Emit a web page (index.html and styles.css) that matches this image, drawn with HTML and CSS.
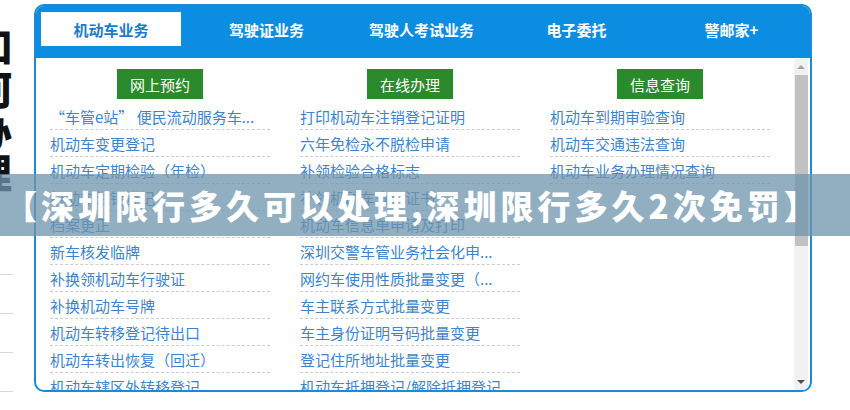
FILE: index.html
```html
<!DOCTYPE html>
<html lang="zh-CN">
<head>
<meta charset="utf-8">
<title>机动车业务</title>
<link rel="stylesheet" href="styles.css">
</head>
<body>
<div class="page">
  <aside class="side">
    <div class="side-chars">
      <span><b>如</b></span><span><b>何</b></span><span><b>办</b></span><span><b>理</b></span><span><b>：</b></span>
    </div>
    <div class="side-lines">
      <i></i><i></i><i></i><i></i>
    </div>
  </aside>
  <div class="panel">
    <nav class="tabs">
      <div class="tab active">机动车业务</div>
      <div class="tab">驾驶证业务</div>
      <div class="tab">驾驶人考试业务</div>
      <div class="tab">电子委托</div>
      <div class="tab">警邮家+</div>
    </nav>
    <div class="body">
      <div class="cols">
        <section class="col">
          <div class="btn-wrap"><span class="btn">网上预约</span></div>
          <ul class="list">
            <li>“车管e站” 便民流动服务车...</li>
            <li>机动车变更登记</li>
            <li>机动车定期检验（年检）</li>
            <li>机动车注销登记</li>
            <li>档案更正</li>
            <li>新车核发临牌</li>
            <li>补换领机动车行驶证</li>
            <li>补换机动车号牌</li>
            <li>机动车转移登记待出口</li>
            <li>机动车转出恢复（回迁）</li>
            <li>机动车辖区外转移登记</li>
          </ul>
        </section>
        <section class="col">
          <div class="btn-wrap"><span class="btn">在线办理</span></div>
          <ul class="list">
            <li>打印机动车注销登记证明</li>
            <li>六年免检永不脱检申请</li>
            <li>补领检验合格标志</li>
            <li>补领机动车登记证书</li>
            <li>机动车信息单申请及打印</li>
            <li>深圳交警车管业务社会化申...</li>
            <li>网约车使用性质批量变更（...</li>
            <li>车主联系方式批量变更</li>
            <li>车主身份证明号码批量变更</li>
            <li>登记住所地址批量变更</li>
            <li>机动车抵押登记/解除抵押登记</li>
          </ul>
        </section>
        <section class="col">
          <div class="btn-wrap"><span class="btn">信息查询</span></div>
          <ul class="list">
            <li>机动车到期审验查询</li>
            <li>机动车交通违法查询</li>
            <li>机动车业务办理情况查询</li>
          </ul>
        </section>
      </div>
      <div class="scrollbar">
        <span class="arrow up"></span>
        <span class="thumb"></span>
        <span class="arrow down"></span>
      </div>
    </div>
  </div>
</div>
<div class="banner">【深圳限行多久可以处理,深圳限行多久2次免罚】</div>
</body>
</html>
```

FILE: styles.css
```css
* { box-sizing: border-box; }
html, body { margin: 0; padding: 0; background: #fff; }
body {
  width: 850px;
  height: 410px;
  overflow: hidden;
  font-family: "Noto Sans CJK SC", "Microsoft YaHei", sans-serif;
  position: relative;
}
.page {
  display: flex;
  align-items: flex-start;
}
.side {
  width: 14px;
  margin-right: 20px;
  height: 410px;
  overflow: hidden;
  display: flex;
  flex-direction: column;
}
.side-chars {
  display: flex;
  flex-direction: column;
  margin-top: 24px;
  width: 12px;
}
.side-chars span {
  display: flex;
  justify-content: flex-end;
  width: 12px;
  height: 42px;
}
.side-chars b {
  flex-shrink: 0;
  display: block;
  width: 40px;
  font-size: 40px;
  line-height: 42px;
  font-weight: 900;
  color: #111;
}
.side-lines {
  margin-top: 40px;
  display: flex;
  flex-direction: column;
  gap: 38px;
}
.side-lines i {
  display: block;
  width: 13px;
  height: 1px;
  background: #d6d6d6;
}
.panel {
  margin-top: 4px;
  width: 778px;
  height: 388px;
  border: 2px solid #1c8ad8;
  border-radius: 10px;
  overflow: hidden;
  display: flex;
  flex-direction: column;
  background: #fff;
}
.tabs {
  display: flex;
  background: #0b8ee2;
  flex-shrink: 0;
  padding-top: 8px;
  margin-top: -2px;
  height: 54px;
}
.tab {
  width: 155px;
  height: 34px;
  display: flex;
  align-items: center;
  justify-content: center;
  color: #fff;
  font-size: 15px;
  font-weight: bold;
}
.tab.active {
  background: #fff;
  color: #1a7cc8;
  width: 140px;
  margin: 0 8px 0 5px;
}
.body {
  flex: 1;
  display: flex;
  min-height: 0;
}
.cols {
  flex: 1;
  display: flex;
  gap: 30px;
  padding-left: 14px;
}
.col {
  width: 220px;
}
.btn-wrap {
  display: flex;
  justify-content: center;
  padding-top: 11px;
}
.btn {
  width: 86px;
  height: 30px;
  background: #2a8a2c;
  color: #fff;
  font-size: 15px;
  display: flex;
  align-items: center;
  justify-content: center;
}
.list {
  list-style: none;
  margin: 4px 0 0;
  padding: 0;
}
.list li {
  height: 27px;
  line-height: 27px;
  border-bottom: 1px dashed #cdcdcd;
  color: #3d84cc;
  font-size: 15px;
  white-space: nowrap;
  overflow: hidden;
}
.scrollbar {
  width: 14px;
  margin: 1px 2px 0 0;
  background: #f1f1f1;
  display: flex;
  flex-direction: column;
  align-items: center;
}
.arrow {
  width: 0;
  height: 0;
  border-left: 4px solid transparent;
  border-right: 4px solid transparent;
  margin: 6px 0;
}
.arrow.up { border-bottom: 4px solid #a3a3a3; }
.arrow.down { border-top: 4px solid #505050; margin-top: auto; }
.thumb {
  width: 13px;
  height: 171px;
  background: #c1c1c1;
}
.banner {
  position: absolute;
  left: 0;
  right: 0;
  top: 174px;
  height: 62px;
  background: rgba(112, 148, 174, 0.76);
  color: #fff;
  font-size: 33px;
  font-weight: 900;
  line-height: 62px;
  padding-left: 4px;
  white-space: nowrap;
  letter-spacing: 4px;
}
```
